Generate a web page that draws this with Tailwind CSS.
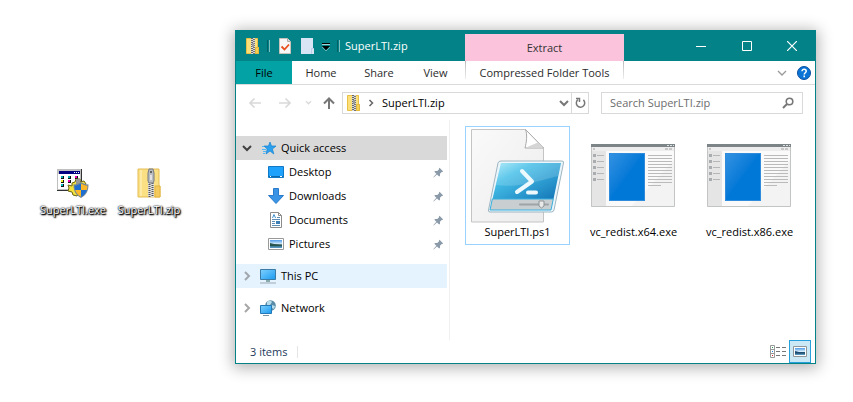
<!DOCTYPE html>
<html lang="en">
<head>
<meta charset="utf-8">
<meta name="viewport" content="width=device-width, initial-scale=1">
<title>SuperLTI.zip</title>
<script src="https://cdn.jsdelivr.net/npm/@tailwindcss/browser@4"></script>
</head>
<body class="flex min-h-screen items-start bg-white pt-[30px] pr-[37px] font-['Open_Sans','Noto_Sans',sans-serif] text-[11px] leading-4 text-black">

<svg class="absolute size-0" aria-hidden="true">
  <defs>
    <linearGradient id="sky" x1="0" y1="0" x2="1" y2="1"><stop offset="0" stop-color="#7fd0ff"/><stop offset="1" stop-color="#1a9bf0"/></linearGradient>
    <linearGradient id="shell" x1="0" y1="0" x2="1" y2="1"><stop offset="0" stop-color="#a5e8f8"/><stop offset=".3" stop-color="#45bfe8"/><stop offset="1" stop-color="#1173b5"/></linearGradient>
    <linearGradient id="paper" x1="0" y1="0" x2="1" y2="1"><stop offset="0" stop-color="#fafafa"/><stop offset="1" stop-color="#ececec"/></linearGradient>
    <linearGradient id="blue" x1="0" y1="0" x2="1" y2="1"><stop offset="0" stop-color="#3492e2"/><stop offset=".45" stop-color="#0a7bd8"/><stop offset=".5" stop-color="#0078d7"/></linearGradient>
    <linearGradient id="photo" x1="0" y1="0" x2="0" y2="1"><stop offset="0" stop-color="#4f9be8"/><stop offset=".5" stop-color="#d6ecfa"/><stop offset=".6" stop-color="#2d5a5c"/><stop offset="1" stop-color="#5b9fd0"/></linearGradient>
    <symbol id="zip" viewBox="0 0 24 30">
      <path d="M1 1h21v17h1v11H1z" fill="#fbdf83" stroke="#e3bd55"/>
      <path d="M18 18h5v11h-5z" fill="#f4ca5c" stroke="#e3b545"/>
      <path d="M4 2v26" stroke="#fdeaa8" stroke-width="2"/>
      <rect x="11" y="14" width="6" height="15" fill="#ddd"/>
      <path d="M12.500 14v15" stroke="#555" stroke-width="2" stroke-dasharray="1 1"/>
      <path d="M15.500 15v14" stroke="#555" stroke-width="2" stroke-dasharray="1 1"/>
      <path d="M12 1h4l1 4v8l-1 2h-4l-1-2V5z" fill="#b9bcc0" stroke="#777b80"/>
      <circle cx="14" cy="4" r="1" fill="#444"/><path d="M14 7v5" stroke="#eee" stroke-width="1.500"/>
    </symbol>
    <symbol id="zip-small" viewBox="0 0 13 16">
      <path d="M.5.500h11v9h1v6H.5z" fill="#fbe07a" stroke="#e9c045"/>
      <path d="M9.500 9.500h3v6h-3z" fill="#f6cf55" stroke="#e5b93c"/>
      <rect x="5" y="0" width="4" height="16" fill="#d7d7d7"/>
      <path d="M6 0v16" stroke="#444" stroke-width="1.500" stroke-dasharray="1 1"/>
      <path d="M8 1v15" stroke="#555" stroke-width="1.500" stroke-dasharray="1 1"/>
      <rect x="6" y="5" width="2" height="4" fill="#999"/>
    </symbol>
    <symbol id="pin" viewBox="0 0 11 11">
      <path d="M6.500.800 10.200 4.500 9.200 5 8.700 4.900 7 6.700 7 8.800 6.200 9.600 4 7.400.700 10.600.300 10.200 3.400 6.800 1.300 4.700 2.100 4 4.300 4 6.100 2.300 6 1.600z" fill="#8a9aa8"/>
    </symbol>
    <symbol id="chev-right" viewBox="0 0 8 10"><path d="M2 1l4 4-4 4" fill="none" stroke="currentColor" stroke-width="2"/></symbol>
    <symbol id="chev-down" viewBox="0 0 10 8"><path d="M1 2l4 4 4-4" fill="none" stroke="currentColor" stroke-width="2"/></symbol>
    <symbol id="app" viewBox="0 0 97 96">
      <g transform="translate(6 16)">
        <rect width="84" height="63" fill="#fafafa"/>
        <path d="M84 15v48H40z" fill="#f3f3f3"/>
        <rect width="84" height="3" fill="#7c8487"/>
        <path d="M76 1.500h2m1 0h2m1 0h1" stroke="#dfe2e3"/>
        <rect y="3" width="84" height="4" fill="#ededed"/>
        <path d="M2 4h2v2H2zM74 4h3v2h-3zM78 4h3v2h-3z" fill="#c6c6c6"/>
        <rect y="7" width="15" height="56" fill="#e5e5e5"/>
        <path d="M3.500 10v27" stroke="#a9adaf" stroke-width="3" stroke-dasharray="3 3"/>
        <path d="M6 11.500h7M6 17.500h7M6 23.500h7M6 29.500h7M6 35.500h7" stroke="#b4b6b7"/>
        <rect x="18.500" y="9.500" width="35" height="47" fill="url(#blue)" stroke="#2f8cdc"/>
        <path d="M57 11.500h24M57 14.500h24M57 17.500h24M57 20.500h24M57 23.500h24M57 26.500h24M57 29.500h24M57 32.500h24M57 35.500h24M57 38.500h24M57 41.500h13" stroke="#bababa"/>
        <path d="M.5 3v59.500h83V3" fill="none" stroke="#c3c5c5"/>
      </g>
    </symbol>
  </defs>
</svg>

<!-- Desktop shortcuts -->
<section class="flex w-[235px] shrink-0 pt-[138px] pl-[35px]" aria-label="Desktop">
  <a href="#" class="flex w-[76px] flex-col items-center gap-1">
    <svg class="h-[30px] w-8" viewBox="0 0 32 30" aria-hidden="true">
      <rect x="0" y="1" width="25" height="22" fill="#333"/>
      <rect x="0" y="1" width="24" height="21" fill="#c0c0c0"/>
      <rect x="1" y="6" width="22" height="15" fill="#fff"/>
      <rect x="2" y="3" width="21" height="3" fill="#000080"/>
      <path d="M17 4h1v1h-1zM19 4h1v1h-1zM21 4h1v1h-1z" fill="#fff"/>
      <path d="M4 8h3v3H4zM11 8h3v3h-3zM18 8h3v3h-3zM4 12h3v3H4zM11 12h3v3h-3zM4 16h3v3H4z" fill="#111"/>
      <path d="M4 8h2v2H4zM11 8h2v2h-2z" fill="#0aa"/><path d="M18 8h2v2h-2zM11 12h2v2h-2z" fill="#e0a"/><path d="M4 12h2v2H4z" fill="#ee2"/><path d="M4 16h2v2H4z" fill="#0bb"/>
      <path d="M19 11h4v3l4-1 2 3-3 2v4l-3 1-3 5-4-1-1-3-4-1 1-3-1-3 4 1v-3l3-1z" fill="#f3e13c" stroke="#6b6410"/>
      <path d="M19 11h4v5h-4z" fill="#999"/>
      <path d="M24 14c2 1.500 4.500 2.500 7.500 2.500 0 6.500-2 10.500-7.500 13.500-5.500-3-7.500-7-7.500-13.500 3 0 5.500-1 7.500-2.500z" fill="#70869a"/>
      <path d="M24 15.500v6.500h-5.800c-.5-1.500-.6-3-.6-4.300 2.400-.2 4.400-.9 6.400-2.200zM24 22h5.800c-.9 3-2.600 5-5.800 6.800z" fill="#1f6fd1"/>
      <path d="M24 15.500v6.500h5.800c.5-1.500.6-3 .6-4.300-2.400-.2-4.400-.9-6.400-2.200zM24 22h-5.800c.9 3 2.600 5 5.800 6.800z" fill="#fbb829"/>
    </svg>
    <span class="text-white [text-shadow:0_0_1px_#000,1px_1px_1px_#000,0_0_2px_#000,1px_1px_2px_#000]">SuperLTI.exe</span>
  </a>
  <a href="#" class="flex w-[76px] flex-col items-center gap-1">
    <svg class="h-[30px] w-6" aria-hidden="true"><use href="#zip"/></svg>
    <span class="text-white [text-shadow:0_0_1px_#000,1px_1px_1px_#000,0_0_2px_#000,1px_1px_2px_#000]">SuperLTI.zip</span>
  </a>
</section>

<!-- Explorer window -->
<main class="flex min-w-0 flex-1 flex-col border border-[#038387] bg-white shadow-[0_2px_14px_2px_rgba(0,0,0,0.3)]">
  <header class="flex h-[30px] bg-[#038387] text-white">
    <div class="flex w-[229px] shrink-0 items-center pl-[10px]">
      <svg class="h-4 w-[13px]" aria-hidden="true"><use href="#zip-small"/></svg>
      <span class="ml-2 h-3 w-[3px] border-x border-l-[#026266] border-r-[#7fbfc1]"></span>
      <button aria-label="Properties" class="ml-[9px]"><svg class="h-4 w-3" viewBox="0 0 12 16" aria-hidden="true"><path d="M.5.500h8l3 3v12H.5z" fill="#f7f7f7" stroke="#c9c2bb"/><path d="M8.500.500v3h3" fill="#ddd" stroke="#aaa"/><path d="M2.500 8.500l3 3 4.500-5" fill="none" stroke="#e8501e" stroke-width="1.800"/></svg></button>
      <button aria-label="New folder" class="ml-[10px]"><svg class="h-4 w-[13px]" viewBox="0 0 13 16" aria-hidden="true"><path d="M0 0h12v10h1v6H0z" fill="#d9e5f5"/><path d="M10.500 16v-5.500H13" fill="none" stroke="#bccde6"/></svg></button>
      <button aria-label="Customize toolbar" class="ml-2"><svg class="h-3 w-2" viewBox="0 0 8 12" aria-hidden="true"><path d="M0 3.500h8" stroke="#000"/><path d="M0 4.500h8" stroke="#9fd0d2"/><path d="M0 6h8L4 10z" fill="#000"/><path d="M0 7l4 4 4-4" fill="none" stroke="#8fc6c8" stroke-width=".7"/></svg></button>
      <span class="ml-[7px] h-3 w-[3px] border-x border-l-[#026266] border-r-[#7fbfc1]"></span>
      <h1 class="ml-[5px]">SuperLTI.zip</h1>
    </div>
    <div class="mt-[3px] flex w-[159px] shrink-0 items-center justify-center bg-[#fbc4dc] text-[#333]">Extract</div>
    <div class="ml-auto flex">
      <button aria-label="Minimize" class="flex w-[46px] items-center justify-center"><svg class="size-[10px]" viewBox="0 0 10 10"><path d="M0 5.500h10" stroke="#fff"/></svg></button>
      <button aria-label="Maximize" class="flex w-[45px] items-center justify-center"><svg class="size-[10px]" viewBox="0 0 10 10"><path d="M.5.500h9v9h-9z" fill="none" stroke="#fff"/></svg></button>
      <button aria-label="Close" class="flex w-[46px] items-center justify-center"><svg class="size-[10px]" viewBox="0 0 10 10"><path d="M0 0l10 10M10 0L0 10" stroke="#fff" stroke-width="1.200"/></svg></button>
    </div>
  </header>

  <nav class="flex h-6 border-b border-[#dadbdc] text-[#2b2b2b]" aria-label="Ribbon">
    <button class="w-14 bg-[#03a2a5] text-black">File</button>
    <button class="w-[58px]">Home</button>
    <button class="w-[58px]">Share</button>
    <button class="w-[55px]">View</button>
    <div class="ml-[2px] flex w-[159px]">
      <span class="h-[18px] w-px bg-linear-to-b from-[#bbb] to-[#eee]"></span>
      <button class="flex-1 whitespace-nowrap">Compressed Folder Tools</button>
      <span class="h-[18px] w-px bg-linear-to-b from-[#bbb] to-[#eee]"></span>
    </div>
    <div class="ml-auto flex items-center gap-[10px] pr-1">
      <button aria-label="Expand ribbon"><svg class="h-2 w-[10px]" viewBox="0 0 10 8"><path d="M1 2l4 4 4-4" fill="none" stroke="#999" stroke-width="1.300"/></svg></button>
      <button aria-label="Help"><svg class="size-[14px]" viewBox="0 0 14 14"><circle cx="7" cy="7" r="6.500" fill="#0a74d6" stroke="#0b4f9e"/><path d="M5 5.200c0-2.600 4.200-2.500 4.200 0C9.200 6.800 7.200 6.800 7.200 8.600M7.200 9.600v1.600" fill="none" stroke="#fff" stroke-width="1.500"/></svg></button>
    </div>
  </nav>

  <div class="flex h-[35px] items-center gap-3 pr-3">
    <div class="flex min-w-0 flex-1 items-center">
      <div class="flex w-[106px] shrink-0 items-center pl-[13px]">
        <button aria-label="Back"><svg class="size-3" viewBox="0 0 12 12"><path d="M12 6H1M5.500 1.500L1 6l4.500 4.500" fill="none" stroke="#d9d9d9" stroke-width="1.600"/></svg></button>
        <button aria-label="Forward" class="ml-[18px]"><svg class="size-3" viewBox="0 0 12 12"><path d="M0 6h11M6.500 1.500L11 6l-4.500 4.500" fill="none" stroke="#d9d9d9" stroke-width="1.600"/></svg></button>
        <button aria-label="Recent locations" class="ml-[14px] text-[#d9d9d9]"><svg class="h-[5px] w-[7px]"><use href="#chev-down"/></svg></button>
        <button aria-label="Up" class="ml-[11px]"><svg class="size-3" viewBox="0 0 12 12"><path d="M6 12V1.500M1 6.500l5-5 5 5" fill="none" stroke="#777" stroke-width="2"/></svg></button>
      </div>
      <div class="flex h-[22px] min-w-0 flex-1 items-center border border-[#d9d9d9] pl-1">
        <svg class="h-4 w-[13px]" aria-hidden="true"><use href="#zip-small"/></svg>
        <svg class="ml-2 h-2 w-[6px] text-[#666]" aria-hidden="true"><use href="#chev-right"/></svg>
        <button class="ml-2">SuperLTI.zip</button>
        <button aria-label="Previous locations" class="mr-[2px] ml-auto text-[#777]"><svg class="h-2 w-[10px]"><use href="#chev-down"/></svg></button>
        <button aria-label="Refresh" class="flex h-full w-[17px] items-center justify-center border-l border-[#d9d9d9]"><svg class="h-3 w-[11px]" viewBox="0 0 11 12"><path d="M3 2.600a4.200 4.200 0 1 0 5.400.3" fill="none" stroke="#777" stroke-width="1.500"/><path d="M1 1.500h3.500V5" fill="none" stroke="#777" stroke-width="1.500"/></svg></button>
      </div>
    </div>
    <label class="flex h-[22px] w-[202px] shrink-0 items-center border border-[#d9d9d9] pr-2 pl-2">
      <input type="text" aria-label="Search" placeholder="Search SuperLTI.zip" class="min-w-0 flex-1 outline-none placeholder:text-[#6d6d6d]">
      <svg class="size-3" viewBox="0 0 12 12" aria-hidden="true"><circle cx="7.500" cy="4.500" r="3.300" fill="none" stroke="#777" stroke-width="1.600"/><path d="M5 7L1 11" stroke="#777" stroke-width="2"/></svg>
    </label>
  </div>

  <div class="flex h-[220px]">
    <nav class="flex w-[214px] shrink-0 flex-col gap-2 border-r border-[#f0f0f0] pt-4 pr-[2px]" aria-label="Folders">
      <ul>
        <li class="flex h-6 items-center bg-[#d9d9d9] pl-[6px]">
          <svg class="h-2 w-[10px] text-[#404040]" aria-hidden="true"><use href="#chev-down"/></svg>
          <svg class="ml-[10px] size-[14px]" viewBox="0 0 14 14" aria-hidden="true"><path d="M8 1l1.500 4H14l-3.600 3 1.400 5L8 10l-4 3 1.200-5L2 5h4.500z" fill="#2ba0ee" stroke="#1583d0" stroke-width=".7"/><path d="M0 8.500h4M1 10.500h3M1 12.500h2M0 5.500h2" stroke="#57b7f3"/></svg>
          <a href="#" class="ml-[5px]">Quick access</a>
        </li>
        <li class="flex h-6 items-center pr-[3px] pl-8">
          <svg class="h-3 w-4" viewBox="0 0 16 12" aria-hidden="true"><path d="M.5.500h15v11H.5z" fill="#1ea2fb" stroke="#1279c6"/><path d="M1 10.500h14" stroke="#0e69af"/><path d="M2 10.500h1m9 0h2" stroke="#fff"/></svg>
          <a href="#" class="ml-[5px] flex-1">Desktop</a><svg class="size-[11px]" aria-hidden="true"><use href="#pin"/></svg>
        </li>
        <li class="flex h-6 items-center pr-[3px] pl-8">
          <svg class="size-4" viewBox="0 0 16 16" aria-hidden="true"><path d="M5.500.500h5v7h5L8 15.500.500 7.500h5z" fill="#3a94e6" stroke="#2a7bc9"/></svg>
          <a href="#" class="ml-[5px] flex-1">Downloads</a><svg class="size-[11px]" aria-hidden="true"><use href="#pin"/></svg>
        </li>
        <li class="flex h-6 items-center pr-[3px] pl-8">
          <svg class="size-4" viewBox="0 0 16 16" aria-hidden="true"><path d="M2.500.500h8l3 3v12h-11z" fill="#fff" stroke="#8b8b8b"/><path d="M10.500.500v3h3" fill="none" stroke="#8b8b8b"/><path d="M4.500 6L6 2.500 7.500 6" fill="none" stroke="#3d8fd0"/><path d="M9 5.500h3M4 7.500h8M4 9.500h3M4 11.500h3M4 13.500h8" stroke="#5d8db5"/><path d="M8 9h4v3H8z" fill="#3d7fb5"/></svg>
          <a href="#" class="ml-[5px] flex-1">Documents</a><svg class="size-[11px]" aria-hidden="true"><use href="#pin"/></svg>
        </li>
        <li class="flex h-6 items-center pr-[3px] pl-8">
          <svg class="h-3 w-4" viewBox="0 0 16 12" aria-hidden="true"><path d="M.5.500h15v11H.5z" fill="#fff" stroke="#999"/><path d="M2 2h12v8H2z" fill="url(#photo)"/><path d="M2 5l4 1 8 1v1H2z" fill="#27544c"/></svg>
          <a href="#" class="ml-[5px] flex-1">Pictures</a><svg class="size-[11px]" aria-hidden="true"><use href="#pin"/></svg>
        </li>
      </ul>
      <div class="flex h-6 items-center bg-[#e5f3ff] pl-[7px]">
        <svg class="h-[10px] w-2 text-[#a0a6ab]" aria-hidden="true"><use href="#chev-right"/></svg>
        <svg class="ml-[9px] size-4" viewBox="0 0 16 16" aria-hidden="true"><path d="M.5 1.500h15v10H.5z" fill="url(#sky)" stroke="#3b7ba5"/><path d="M6 13h4" stroke="#8aa" stroke-width="2"/><path d="M0 15h16" stroke="#9aa9b5"/></svg>
        <a href="#" class="ml-[5px]">This PC</a>
      </div>
      <div class="flex h-6 items-center pl-[7px]">
        <svg class="h-[10px] w-2 text-[#a6a6a6]" aria-hidden="true"><use href="#chev-right"/></svg>
        <svg class="ml-[9px] size-4" viewBox="0 0 16 16" aria-hidden="true"><circle cx="10.500" cy="5.500" r="5.300" fill="#5a8ca8"/><path d="M7 2c2-2 4-1 5 0l-2 3-3 1zM12 5l3 1-1 3-2-1z" fill="#b9dceb"/><path d="M.5 5.500h11v8H.5z" fill="url(#sky)" stroke="#2379b5"/><path d="M3 15.500h6" stroke="#7a93a5"/></svg>
        <a href="#" class="ml-[5px]">Network</a>
      </div>
    </nav>

    <section class="flex min-w-0 flex-1 items-start gap-[11px] pt-[6px] pl-[15px]" aria-label="Files">
      <a href="#" class="flex h-[119px] w-[105px] shrink-0 flex-col items-center border border-[#99d1ff] pt-px">
        <svg class="h-24 w-[97px]" viewBox="0 0 97 96" aria-hidden="true">
          <path d="M2.500 1.500h54l18 18.500v74h-72z" fill="url(#paper)" stroke="#c4c4c4"/>
          <path d="M56.500 1.500c2 5 1 13-.5 18.500h18.500z" fill="#fff" stroke="#a9a9a9"/>
          <path d="M57 19.500h17l-5-5c-4 2-8 3-12 5z" fill="#d5d5d5"/>
          <path d="M32 33h61q2 0 1.500 2L85 82q-.5 2-2.500 2H21q-2 0-1.500-2L29 35q.5-2 3-2z" fill="#eaf6fb" stroke="#9fb6c2"/>
          <path d="M32 35h60L84.500 71H23.500z" fill="url(#shell)"/>
          <path d="M32 35h60l-3 13c-18 4-34 12-62 9z" fill="#fff" opacity=".16"/>
          <path d="M23.300 71h61L82 82H21z" fill="#c9ced1" stroke="#38b0dd"/>
          <path d="M53 43l10 10.500L48 64" fill="none" stroke="#eef9fd" stroke-width="4" stroke-linecap="round" stroke-linejoin="round"/>
          <path d="M59 64.500h8" stroke="#eef9fd" stroke-width="4" stroke-linecap="round"/>
          <path d="M51 76.500h28" stroke="#9da3a6" stroke-width="2" stroke-linecap="round"/>
          <path d="M70 73h5v5l-2.500 2-2.500-2z" fill="#e9e9e9" stroke="#8d9396"/>
        </svg>
        <span>SuperLTI.ps1</span>
      </a>
      <a href="#" class="flex h-[119px] w-[105px] shrink-0 flex-col items-center border border-transparent pt-px">
        <svg class="h-24 w-[97px]" aria-hidden="true"><use href="#app"/></svg>
        <span>vc_redist.x64.exe</span>
      </a>
      <a href="#" class="flex h-[119px] w-[105px] shrink-0 flex-col items-center border border-transparent pt-px">
        <svg class="h-24 w-[97px]" aria-hidden="true"><use href="#app"/></svg>
        <span>vc_redist.x86.exe</span>
      </a>
    </section>
  </div>

  <footer class="flex h-[23px] items-center pr-1 pl-[14px] text-[#1e395b]">
    <span>3 items</span>
    <span class="ml-[10px] h-3 w-px bg-[#e5e5e5]"></span>
    <button aria-label="Details view" class="ml-auto"><svg class="h-[13px] w-4" viewBox="0 0 16 13"><path d="M.5.500h4v12h-4zM0 4.500h5M0 8.500h5" fill="#fff" stroke="#999"/><path d="M2 2h1v1H2z" fill="#1a9d50"/><path d="M2 6h1v1H2z" fill="#2a7fe0"/><path d="M2 10h1v1H2z" fill="#d22"/><path d="M6 2.500h4m2 0h4M6 6.500h4m2 0h4M6 10.500h4m2 0h4" stroke="#777"/></svg></button>
    <button aria-label="Large icons view" class="ml-[3px] flex h-full w-[22px] items-center justify-center border border-[#26a0da] bg-[#cbe8f6]"><svg class="h-[11px] w-[14px]" viewBox="0 0 14 11"><path d="M.5.500h13v10H.5z" fill="#fff" stroke="#8f9699"/><path d="M2 2h10v7H2z" fill="url(#photo)"/><path d="M2 5l4 1 6 .5v1H2z" fill="#1d4b76"/></svg></button>
  </footer>
</main>
</body>
</html>
